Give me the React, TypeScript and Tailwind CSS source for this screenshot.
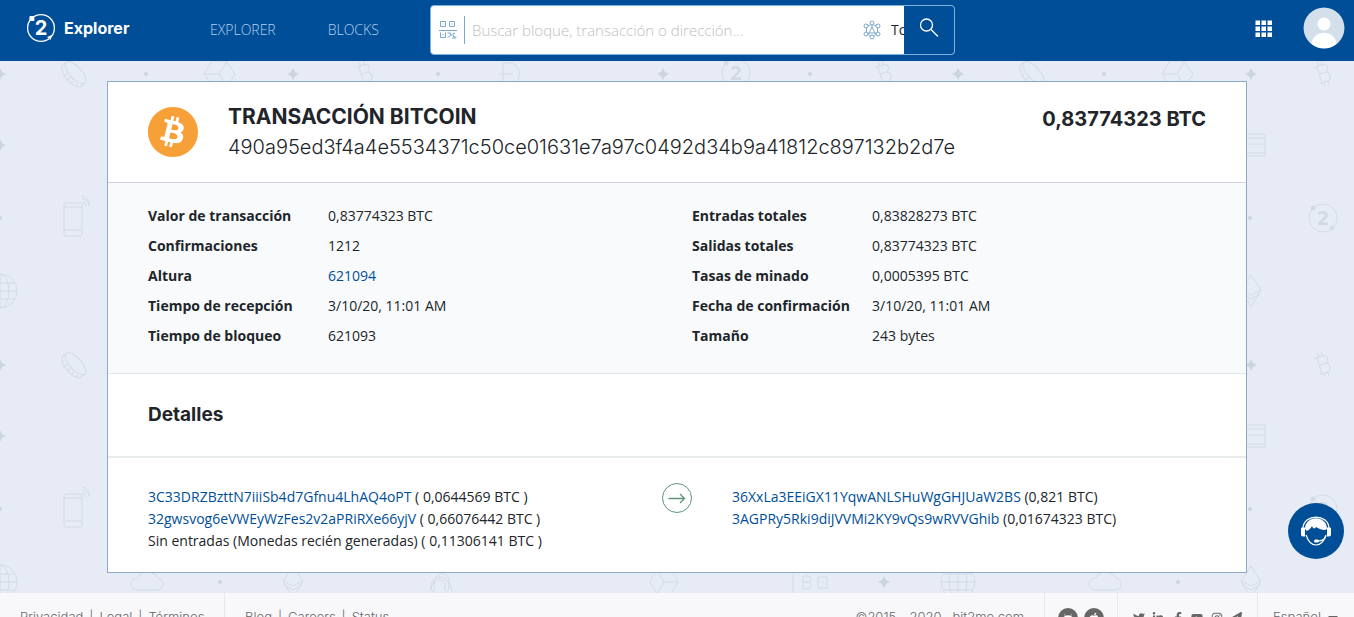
import type { ReactNode } from "react";
import {
  FaAndroid,
  FaApple,
  FaBitcoin,
  FaCaretDown,
  FaFacebookF,
  FaInstagram,
  FaLinkedinIn,
  FaTwitter,
  FaYoutube,
} from "react-icons/fa";
import { FaPaperPlane } from "react-icons/fa6";

const summary = [
  [
    { label: "Valor de transacción", value: "0,83774323 BTC" },
    { label: "Confirmaciones", value: "1212" },
    { label: "Altura", value: "621094", url: "#" },
    { label: "Tiempo de recepción", value: "3/10/20, 11:01 AM" },
    { label: "Tiempo de bloqueo", value: "621093" },
  ],
  [
    { label: "Entradas totales", value: "0,83828273 BTC" },
    { label: "Salidas totales", value: "0,83774323 BTC" },
    { label: "Tasas de minado", value: "0,0005395 BTC" },
    { label: "Fecha de confirmación", value: "3/10/20, 11:01 AM" },
    { label: "Tamaño", value: "243 bytes" },
  ],
];

const inputs = [
  { address: "3C33DRZBzttN7iiiSb4d7Gfnu4LhAQ4oPT", amount: "( 0,0644569 BTC )" },
  { address: "32gwsvog6eVWEyWzFes2v2aPRiRXe66yjV", amount: "( 0,66076442 BTC )" },
];

const outputs = [
  { address: "36XxLa3EEiGX11YqwANLSHuWgGHJUaW2BS", amount: "(0,821 BTC)" },
  { address: "3AGPRy5Rki9diJVVMi2KY9vQs9wRVVGhib", amount: "(0,01674323 BTC)" },
];

const socials = [
  { name: "Twitter", icon: <FaTwitter /> },
  { name: "LinkedIn", icon: <FaLinkedinIn /> },
  { name: "Facebook", icon: <FaFacebookF /> },
  { name: "YouTube", icon: <FaYoutube /> },
  { name: "Instagram", icon: <FaInstagram /> },
  { name: "Telegram", icon: <FaPaperPlane /> },
];

const stars = [
  [0, 74],
  [0, 145],
  [293, 74],
  [663, 74],
  [884, 291],
];

const dots = [
  [146, 74],
  [438, 74],
  [810, 74],
  [0, 218],
  [292, 218],
  [220, 291],
];

const coins = [
  [365, 73],
  [884, 73],
];

const badges = [
  [736, 73],
  [365, 218],
];

// Tiled crypto doodles behind the card
function Backdrop() {
  return (
    <svg className="absolute inset-0 -z-10 size-full" aria-hidden="true">
      <defs>
        <g id="coin" transform="rotate(-18)">
          <path d="M-7 -8h9a4 4 0 0 1 0 8h-6M2 0h1a5 5 0 0 1 0 9h-9M-4 -8v17M-2 -12v4M2 -12v4M-2 9v4M2 9v4" />
        </g>
        <g id="badge">
          <circle r="14" />
          <circle cx="-10" cy="-10" r="2" fill="#d3dbe8" />
          <circle cx="9" cy="10" r="2" fill="#d3dbe8" />
          <text
            y="7"
            textAnchor="middle"
            className="font-['Open_Sans',sans-serif] text-xl font-bold"
            fill="#d0d9e6"
            stroke="none"
          >
            2
          </text>
        </g>
        <pattern id="doodles" x="-30" y="36" width="958" height="291" patternUnits="userSpaceOnUse">
          <g transform="translate(30 -36)" fill="none" stroke="#d2dbe7" strokeWidth="1">
            {stars.map(([x, y]) => (
              <path
                key={`${x}-${y}`}
                transform={`translate(${x} ${y})`}
                d="M0 -6L2 -2L6 0L2 2L0 6L-2 2L-6 0L-2 -2Z"
                fill="#cbd4e1"
                stroke="none"
              />
            ))}
            {dots.map(([x, y]) => (
              <circle key={`${x}-${y}`} cx={x} cy={y} r="2" fill="#cbd4e1" stroke="none" />
            ))}
            {coins.map(([x, y]) => (
              <use key={`${x}-${y}`} href="#coin" x={x} y={y} />
            ))}
            {badges.map(([x, y]) => (
              <use key={`${x}-${y}`} href="#badge" x={x} y={y} />
            ))}
            {/* coin seen from the side */}
            <g transform="translate(74 74) rotate(48)">
              <ellipse rx="14" ry="6" cy="-2" />
              <path d="M-14 -1v3c0 9 28 9 28 0v-3M-10 4v3M-5 5v4M0 5v4M5 5v4M10 4v3" />
            </g>
            <path d="M40 106l16 -16" strokeDasharray="1 4" />
            {/* cubes */}
            <path d="M204 74l8 -13h14l9 13l-8 13h-14zM204 74h15l8 -13M219 74l8 13" />
            <path d="M650 291l7 -12h14l7 12l-7 12h-14zM678 291h-14l-7 -12M664 291l-7 12" />
            {/* D coin */}
            <path d="M503 63h9a12 12 0 0 1 0 22h-9zM499 74h14" />
            {/* phone */}
            <rect x="64" y="203" width="18" height="33" rx="2" />
            <path d="M64 207h18M64 230h18M82 202a4 4 0 0 1 4 4M82 199a7 7 0 0 1 7 7M82 196a10 10 0 0 1 8 8" />
            {/* globe */}
            <g transform="translate(0 291)">
              <circle r="17" />
              <path d="M-17 0h34M-14 -8h28M-14 8h28M0 -17v34" />
              <ellipse rx="9" ry="17" />
            </g>
            {/* card */}
            <rect x="278" y="134" width="29" height="22" />
            <path d="M278 138h29M278 144h29M278 153h29" />
            {/* cloud */}
            <path d="M136 299h20a6 6 0 0 0 2 -12a8 8 0 0 0 -6 -5a10 10 0 0 0 -14 5a6 6 0 0 0 -2 12z" />
            {/* ether */}
            <path d="M293 275l10 15l-10 17l-10 -17zM283 290l10 5l10 -5M284 294l9 5l9 -5" />
            {/* padlock */}
            <path d="M429 300l8 -15a7 7 0 0 1 12 4l3 11M434 300v-6a5 5 0 0 1 11 0v6" />
            <circle cx="440" cy="295" r="9" />
            {/* wallet */}
            <path d="M793 280v22M803 285h5a3 3 0 0 1 0 6h-5zM803 291h6a4 4 0 0 1 0 7h-6zM818 286h9v11h-9zM822 291h2" />
          </g>
        </pattern>
      </defs>
      <rect width="100%" height="100%" fill="url(#doodles)" />
    </svg>
  );
}

function Logo() {
  return (
    <a href="#" className="flex items-center gap-2 text-white">
      <svg viewBox="0 0 30 30" className="size-[30px]" aria-hidden="true">
        <circle cx="15" cy="15" r="13.4" fill="none" stroke="currentColor" strokeWidth="1.3" />
        <rect x="3.4" y="3" width="5" height="5" rx="1" fill="currentColor" />
        <path d="M21 24l5 -2l-1.5 5z" fill="currentColor" />
        <text
          x="15"
          y="22"
          textAnchor="middle"
          fill="currentColor"
          className="font-['Inter',sans-serif] text-xl font-bold"
        >
          2
        </text>
      </svg>
      <span className="font-['Inter',sans-serif] text-base font-bold">Explorer</span>
    </a>
  );
}

function Header() {
  return (
    <header className="flex h-[61px] items-start bg-[#004e98] pr-[9px] pl-[26px]">
      <div className="flex w-[184px] shrink-0 pt-[13px]">
        <Logo />
      </div>
      <nav className="flex w-[220px] shrink-0 gap-[52px] pt-5 text-sm font-light text-[#b5d0ea]">
        <a href="#">EXPLORER</a>
        <a href="#">BLOCKS</a>
      </nav>
      <form className="mt-[5px] flex h-[50px] w-[525px] shrink-0 overflow-hidden rounded border border-[#7fb0da] bg-white">
        <div className="flex min-w-0 flex-1 items-center pl-2">
          <svg viewBox="0 0 18 20" className="h-5 w-[18px] shrink-0" fill="none" stroke="#7ba9cb" aria-hidden="true">
            <path d="M1.5 1.5h5v5h-5zM10.5 1.5h5v5h-5zM0 10.5h18M1.5 12.5v5h5v-5M3.5 4h1M12.5 4h1M3.5 14.5h1M8.5 13h3v2h3v2h3M14 13.5h2M8.5 17.5l3 -2M13 18h4" />
          </svg>
          <span className="mx-[7px] h-7 w-px shrink-0 bg-[#7ba9cb]" />
          <input
            type="text"
            aria-label="Buscar"
            placeholder="Buscar bloque, transacción o dirección..."
            className="h-full min-w-0 flex-1 pb-px text-[15px] font-light outline-none placeholder:text-[#c0c0bc]"
          />
          <svg viewBox="0 0 18 20" className="h-5 w-[18px] shrink-0" fill="none" stroke="#7ba9cb" aria-hidden="true">
            <path d="M9 4L14.5 6.5V13.5L9 16.5L3.5 13.5V6.5ZM9 7L6 13h6zM9 4v3M3.5 13.5L6 13M14.5 13.5L12 13" />
            <g fill="#fff">
              <circle cx="9" cy="3" r="2" />
              <circle cx="9" cy="17" r="2" />
              <circle cx="3" cy="6" r="2" />
              <circle cx="15" cy="6" r="2" />
              <circle cx="3" cy="14" r="2" />
              <circle cx="15" cy="14" r="2" />
            </g>
          </svg>
          <select
            aria-label="Moneda"
            className="ml-[10px] h-full w-[13px] shrink-0 appearance-none overflow-hidden text-sm text-[#212529] outline-none [text-overflow:clip]"
          >
            <option>Todos</option>
          </select>
        </div>
        <button
          type="submit"
          aria-label="Buscar"
          className="flex w-[50px] shrink-0 items-center justify-center bg-[#004e98] pb-1 text-white"
        >
          <svg viewBox="0 0 20 20" className="size-5" fill="none" stroke="currentColor" strokeWidth="1.3">
            <circle cx="7.5" cy="7" r="6" />
            <path d="M12 11.5l7 7" />
          </svg>
        </button>
      </form>
      <div className="ml-auto flex items-center gap-[30px] pt-[7px]">
        <button type="button" aria-label="Aplicaciones" className="pt-0.5 text-white">
          <svg viewBox="0 0 18 18" className="size-[18px]" fill="currentColor">
            {[0, 6, 12].map((y) =>
              [0, 6, 12].map((x) => <rect key={`${x}-${y}`} x={x + 0.5} y={y + 0.5} width="4.5" height="4.5" />)
            )}
          </svg>
        </button>
        <button type="button" aria-label="Cuenta">
          <svg viewBox="0 0 42 42" className="size-[42px] rounded-full">
            <circle cx="21" cy="21" r="20.5" fill="#d3dfea" />
            <circle cx="21" cy="17" r="6.5" fill="#fff" />
            <path d="M8.5 37c1 -15 24 -15 25 0a20.5 20.5 0 0 1 -25 0z" fill="#fff" />
          </svg>
        </button>
      </div>
    </header>
  );
}

function AddressLine({ address, amount }: { address: string; amount: string }) {
  return (
    <li>
      <a href="#" className="text-[#004e98]">
        {address}
      </a>{" "}
      {amount}
    </li>
  );
}

function Transaction() {
  return (
    <main className="mx-auto my-5 w-full max-w-[1140px] border border-[#8cabc9] bg-white">
      <section className="flex items-start border-b border-[#ced4da] px-10 pt-[25px] pb-5 font-['Inter',sans-serif]">
        <FaBitcoin viewBox="8 8 496 496" className="mr-[30px] size-[50px] shrink-0 text-[#f7a038]" />
        <div className="min-w-0 flex-1">
          <h1 className="text-[21px] leading-5 font-bold">TRANSACCIÓN BITCOIN</h1>
          <p className="mt-[5px] text-xl leading-[30px] font-light">
            490a95ed3f4a4e5534371c50ce01631e7a97c0492d34b9a41812c897132b2d7e
          </p>
        </div>
        <p className="text-xl leading-6 font-bold">0,83774323 BTC</p>
      </section>

      <section className="grid grid-cols-2 gap-[30px] border-b border-[#e3e7ea] bg-[#f8fafc] px-10 pt-[18px] pb-[22px]">
        {summary.map((rows, index) => (
          <dl key={index} className="text-sm leading-[30px]">
            {rows.map((row) => (
              <div key={row.label} className="flex">
                <dt className="w-[180px] font-bold">{row.label}</dt>
                <dd>
                  {row.url ? (
                    <a href={row.url} className="text-[#004e98]">
                      {row.value}
                    </a>
                  ) : (
                    row.value
                  )}
                </dd>
              </div>
            ))}
          </dl>
        ))}
      </section>

      <h2 className="border-b-2 border-[#e9ecec] px-10 py-[27px] font-['Inter',sans-serif] text-[19px] leading-7 font-bold">
        Detalles
      </h2>

      <section className="flex px-10 pt-[25px] pb-5 text-sm leading-[22px]">
        <ul className="w-[514px] pt-[3px]">
          {inputs.map((item) => (
            <AddressLine key={item.address} {...item} />
          ))}
          <li>Sin entradas (Monedas recién generadas) ( 0,11306141 BTC )</li>
        </ul>
        <svg viewBox="0 0 30 30" className="mr-10 size-[30px]" fill="none" stroke="#5f9478" aria-hidden="true">
          <circle cx="15" cy="15" r="14.5" />
          <path d="M6.5 15.5h16M18 11l4.5 4.500l-4.5 4.5" strokeWidth="1.3" />
        </svg>
        <ul className="pt-[3px]">
          {outputs.map((item) => (
            <AddressLine key={item.address} {...item} />
          ))}
        </ul>
      </section>
    </main>
  );
}

function FooterCell({ className, children }: { className: string; children: ReactNode }) {
  return <div className={`flex items-center ${className}`}>{children}</div>;
}

function FooterLinks({ items }: { items: string[] }) {
  return (
    <>
      {items.map((item, index) => (
        <span key={item}>
          {index > 0 && <span className="px-[6px]">|</span>}
          <a href="#">{item}</a>
        </span>
      ))}
    </>
  );
}

function Footer() {
  return (
    <footer className="flex h-[50px] bg-[#f8f8fb] font-['Inter',sans-serif] text-[13px] font-light text-[#666]">
      <FooterCell className="w-[225px] border-r border-[#e6e8ee] pl-5">
        <FooterLinks items={["Privacidad", "Legal", "Términos"]} />
      </FooterCell>
      <FooterCell className="flex-1 pl-5">
        <FooterLinks items={["Blog", "Careers", "Status"]} />
      </FooterCell>
      <FooterCell className="border-r border-[#e6e8ee] pr-5">©2015 - 2020 · bit2me.com</FooterCell>
      <FooterCell className="w-[73px] justify-center gap-[6px] border-r border-[#e6e8ee]">
        <a href="#" aria-label="Android" className="flex size-5 items-center justify-center rounded-full bg-[#666] text-xs text-white">
          <FaAndroid />
        </a>
        <a href="#" aria-label="Apple" className="flex size-5 items-center justify-center rounded-full bg-[#666] text-xs text-white">
          <FaApple />
        </a>
      </FooterCell>
      <FooterCell className="w-[140px] justify-between border-r border-[#e6e8ee] px-[15px] text-xs">
        {socials.map((item) => (
          <a href="#" key={item.name} aria-label={item.name}>
            {item.icon}
          </a>
        ))}
      </FooterCell>
      <FooterCell className="w-24 pl-[15px]">
        <button type="button" className="flex items-center gap-1">
          Español <FaCaretDown className="text-base" />
        </button>
      </FooterCell>
    </footer>
  );
}

function SupportButton() {
  return (
    <button
      type="button"
      aria-label="Soporte"
      className="fixed right-[10px] bottom-[58px] flex size-14 items-center justify-center rounded-full bg-[#004e98] text-white"
    >
      <svg viewBox="0 0 32 32" className="size-8" fill="none" stroke="currentColor">
        <path d="M3 13C4 -1.5 28 -1.5 29 13" strokeWidth="1.3" />
        <path d="M5 14C5 -.5 27 -.5 27 14L25 15C22 15 19 14 16 12C15 14 13 14 12 11C11 13 9 15 7 16Z" fill="currentColor" stroke="none" />
        <path d="M1 13.5q0 -1 1 -1h3v9h-2q-2 0 -2 -2zM31 13.5q0 -1 -1 -1h-3v9h2q2 0 2 -2z" fill="currentColor" stroke="none" />
        <path d="M6 20C8 26 12 30 16 30C20 30 24 26 26 20" strokeWidth="1.2" />
        <path d="M26 21q-2 5 -8 5" strokeWidth="1.2" />
        <rect x="14" y="24.5" width="5" height="3" rx="1.5" fill="currentColor" stroke="none" />
      </svg>
    </button>
  );
}

export default function App() {
  return (
    <div className="relative isolate flex h-screen flex-col overflow-x-hidden overflow-y-auto bg-[#e7ebf5] font-['Open_Sans',sans-serif] text-[#212529] [scrollbar-width:none]">
      <Backdrop />
      <div className="shrink-0">
        <Header />
        <Transaction />
        <Footer />
      </div>
      <SupportButton />
    </div>
  );
}
